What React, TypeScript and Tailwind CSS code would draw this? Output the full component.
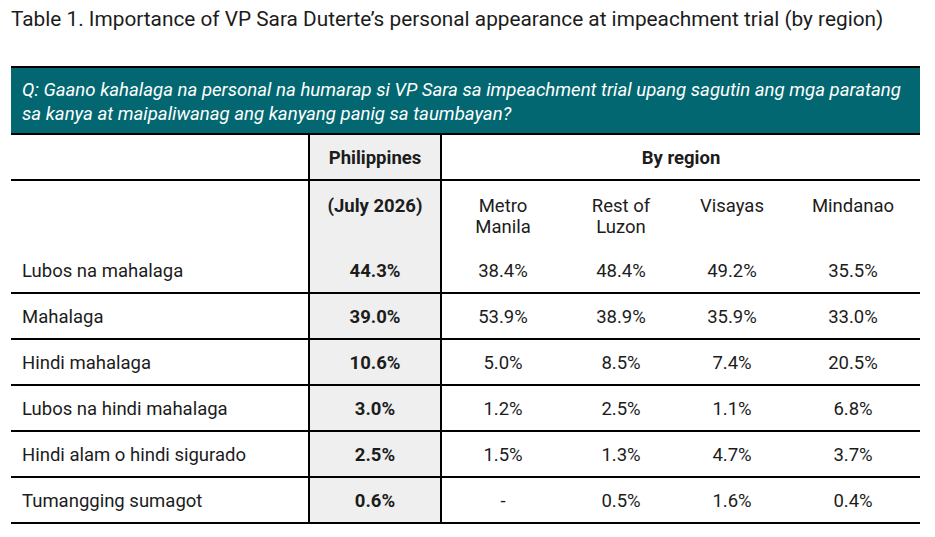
const regions = ["Metro Manila", "Rest of Luzon", "Visayas", "Mindanao"];

const rows: { label: string; ph: string; values: string[] }[] = [
  { label: "Lubos na mahalaga", ph: "44.3%", values: ["38.4%", "48.4%", "49.2%", "35.5%"] },
  { label: "Mahalaga", ph: "39.0%", values: ["53.9%", "38.9%", "35.9%", "33.0%"] },
  { label: "Hindi mahalaga", ph: "10.6%", values: ["5.0%", "8.5%", "7.4%", "20.5%"] },
  { label: "Lubos na hindi mahalaga", ph: "3.0%", values: ["1.2%", "2.5%", "1.1%", "6.8%"] },
  { label: "Hindi alam o hindi sigurado", ph: "2.5%", values: ["1.5%", "1.3%", "4.7%", "3.7%"] },
  { label: "Tumangging sumagot", ph: "0.6%", values: ["-", "0.5%", "1.6%", "0.4%"] },
];

const cols = "grid grid-cols-[297px_134px_122px_114px_108px_134px]";

function RegionName({ name }: { name: string }) {
  // the two long names break onto a second line in the source table
  const parts = name === "Metro Manila" ? ["Metro", "Manila"] : name === "Rest of Luzon" ? ["Rest of", "Luzon"] : [name];
  return (
    <>
      {parts.map((p, i) => (
        <div key={i}>{p}</div>
      ))}
    </>
  );
}

export default function App() {
  return (
    <div className="min-h-[537px] w-[935px] bg-white text-[#1c1c1c] font-['Roboto',sans-serif]">
      <h1 className="pl-[11px] pt-[6px] text-[20.8px] leading-[26px] font-normal">
        Table 1. Importance of VP Sara Duterte’s personal appearance at impeachment trial (by region)
      </h1>

      <div className="ml-[11px] mt-[34px] w-[909px]">
        <div className="h-[69px] border-y-2 border-black bg-[#026771] pl-[11px] pr-[4px] pt-[10px] text-[18.6px] italic leading-[24px] text-white">
          Q: Gaano kahalaga na personal na humarap si VP Sara sa impeachment trial upang sagutin ang mga paratang
          <br />
          sa kanya at maipaliwanag ang kanyang panig sa taumbayan?
        </div>

        <div className={`${cols} h-[46px] border-b-2 border-black pt-[4px] text-[18.5px] font-bold`}>
          <div />
          <div className="-mt-[4px] flex items-center justify-center border-x-2 border-black bg-[#efefef] pt-[4px]">
            Philippines
          </div>
          <div className="col-span-4 flex items-center justify-center">By region</div>
        </div>

        <div className={`${cols} h-[67px] text-[18.5px] leading-[21px]`}>
          <div />
          <div className="border-x-2 border-black bg-[#efefef] pt-[15px] text-center font-bold">(July 2026)</div>
          {regions.map((r) => (
            <div key={r} className="pt-[15px] text-center">
              <RegionName name={r} />
            </div>
          ))}
        </div>

        {rows.map((row) => (
          <div key={row.label} className={`${cols} h-[46px] border-b-2 border-black text-[18.5px]`}>
            <div className="flex items-center pl-[11px] pt-[4px]">{row.label}</div>
            <div className="flex items-center justify-center border-x-2 border-black bg-[#efefef] pt-[4px] font-bold">
              {row.ph}
            </div>
            {row.values.map((v, i) => (
              <div key={i} className="flex items-center justify-center pt-[4px]">
                {v}
              </div>
            ))}
          </div>
        ))}
      </div>
    </div>
  );
}
